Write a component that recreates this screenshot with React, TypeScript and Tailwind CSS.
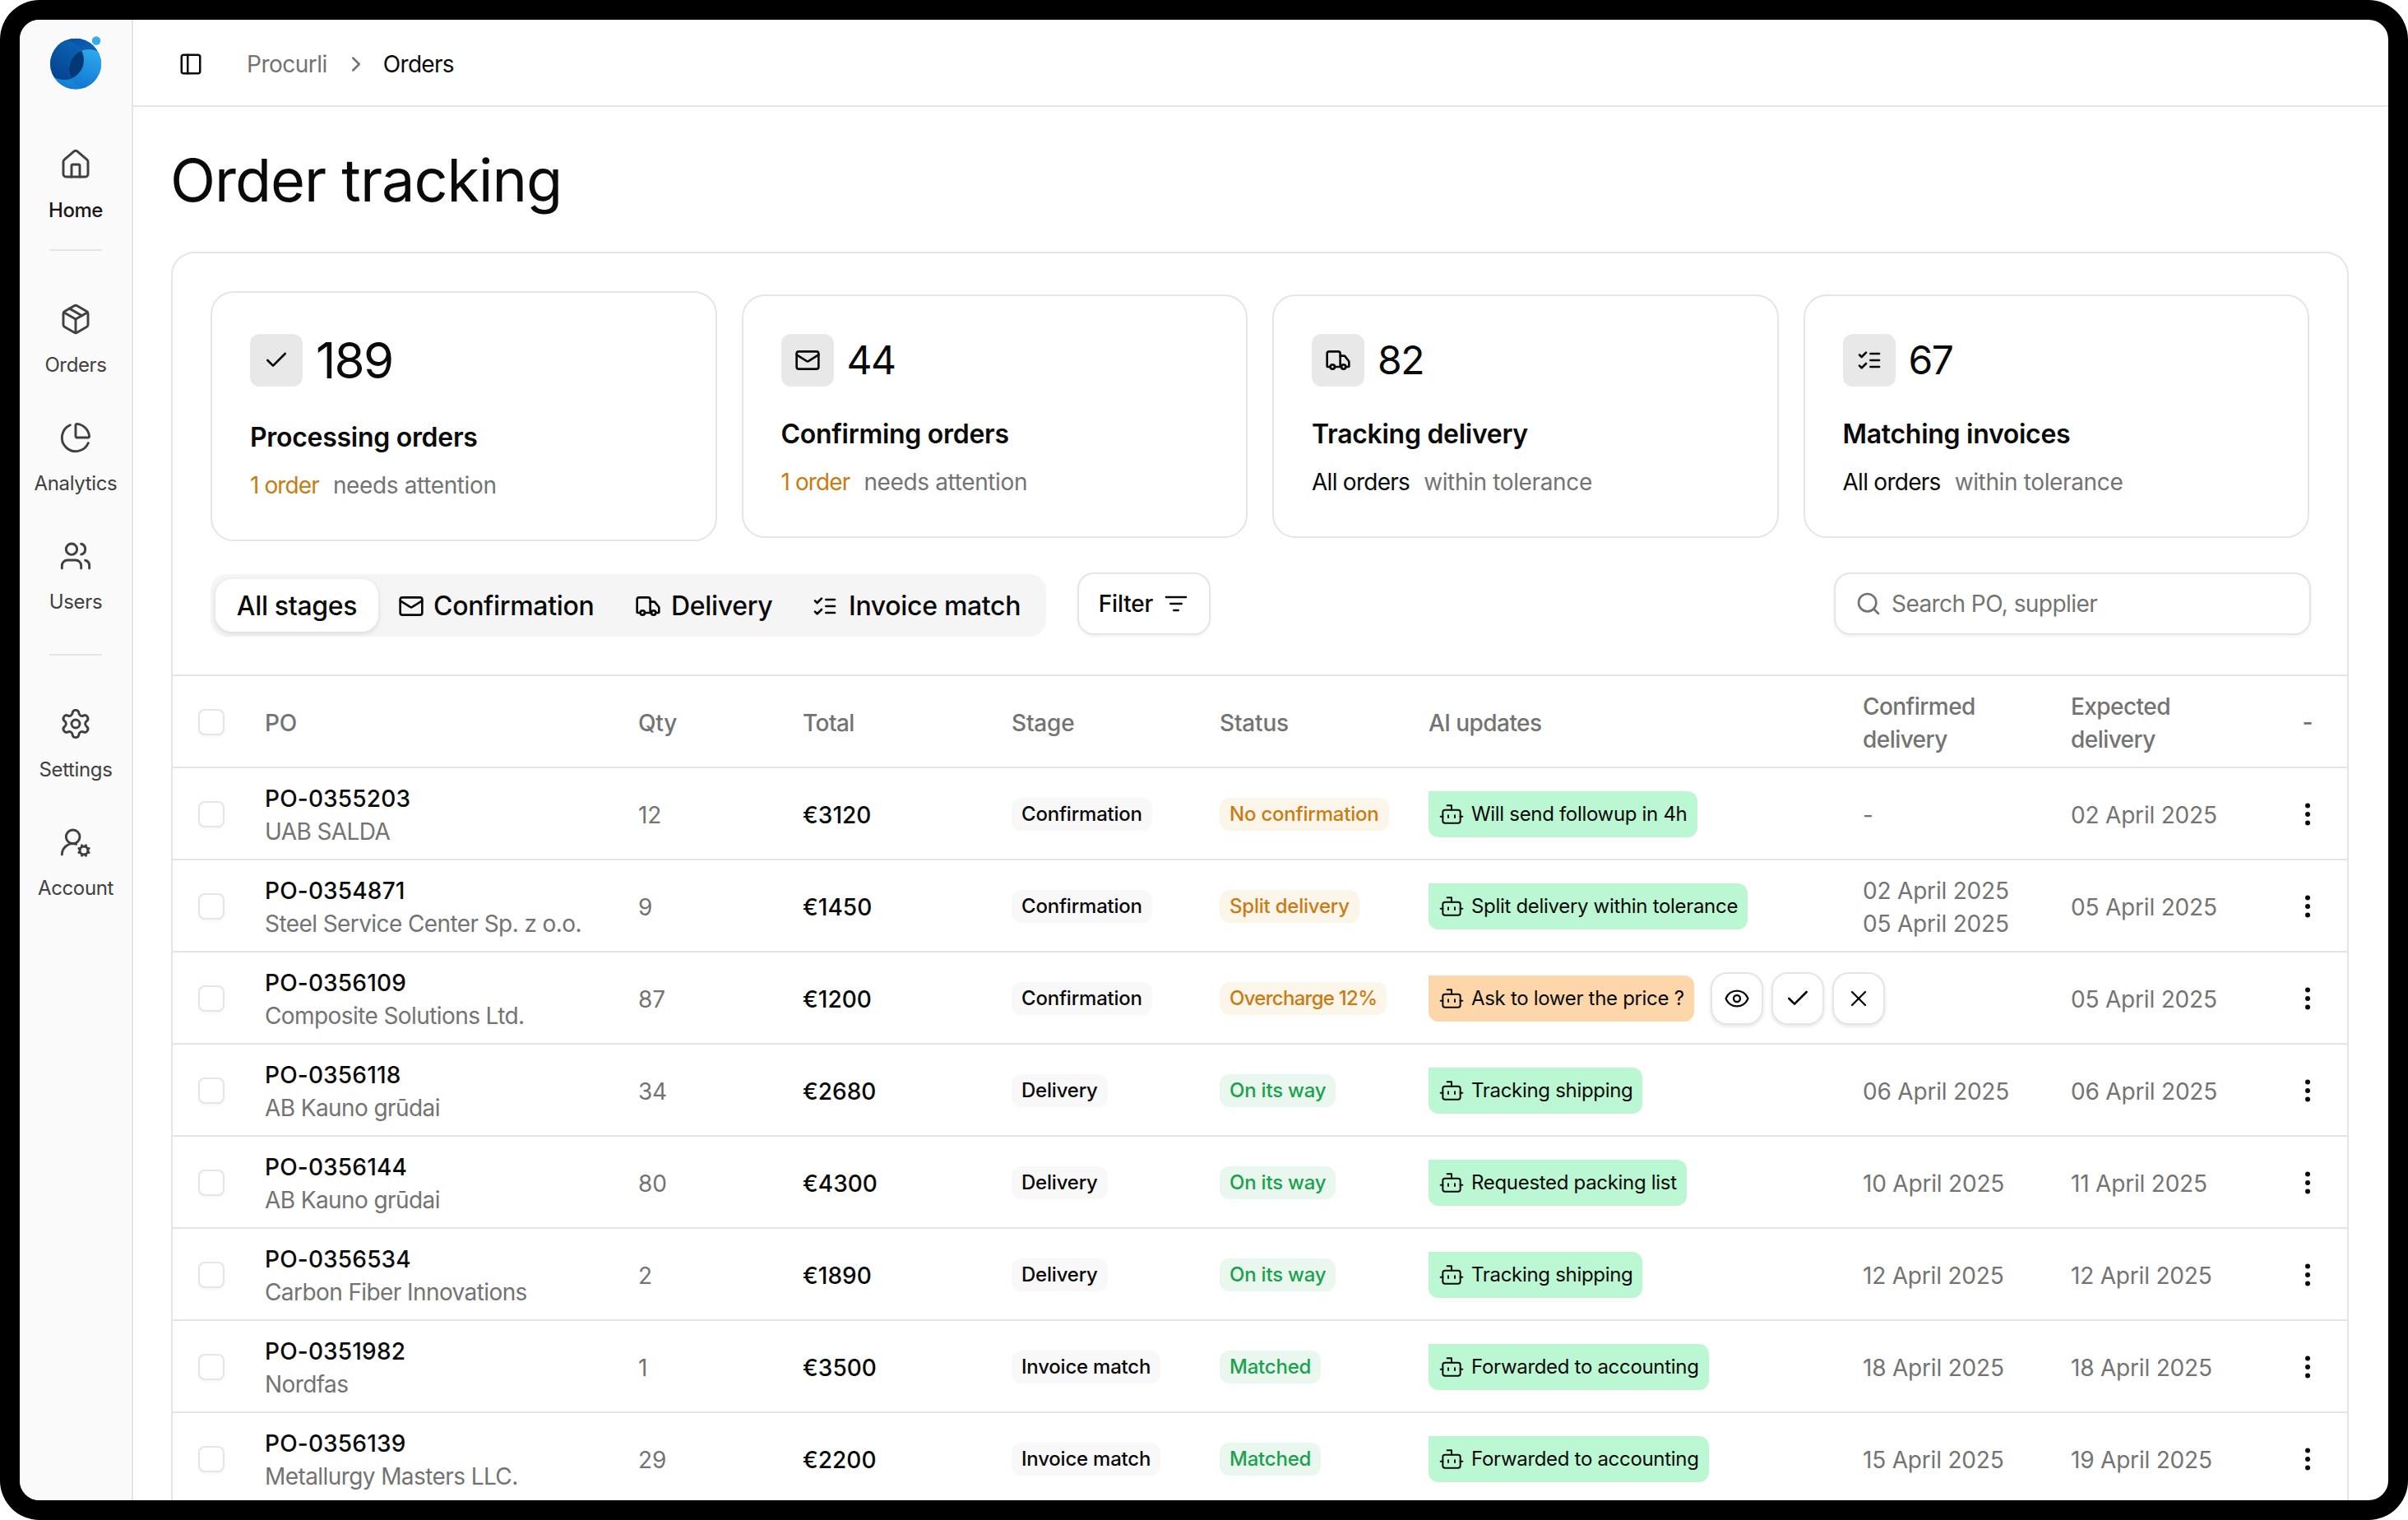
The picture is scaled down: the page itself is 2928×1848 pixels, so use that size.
import React from 'react';
import {
  Bot,
  Check,
  ChevronRight,
  EllipsisVertical,
  Eye,
  House,
  Mail,
  Package,
  PanelLeft,
  ChartPie,
  Search,
  Settings,
  Truck,
  UserRoundCog,
  Users,
  X,
} from 'lucide-react';

type IconProps = { size?: number; strokeWidth?: number; className?: string };

const LineIcon = ({ size = 32, strokeWidth = 2, className, d }: IconProps & { d: string }) => (
  <svg
    width={size}
    height={size}
    viewBox="0 0 24 24"
    fill="none"
    stroke="currentColor"
    strokeWidth={strokeWidth}
    strokeLinecap="round"
    strokeLinejoin="round"
    className={className}
  >
    <path d={d} />
  </svg>
);

const ListChecks = (props: IconProps) => (
  <LineIcon {...props} d="m3 17 2 2 4-4 M3 7l2 2 4-4 M13 6h8 M13 12h8 M13 18h8" />
);

const ListFilter = (props: IconProps) => <LineIcon {...props} d="M3 6h18 M7 12h10 M10 18h4" />;

const Logo = () => (
  <svg width="64" height="66" viewBox="61 43 64 66" className="shrink-0">
    <defs>
      <linearGradient id="base" x1="0.1" y1="0.1" x2="0.85" y2="0.95">
        <stop offset="0" stopColor="#05499b" />
        <stop offset="0.5" stopColor="#0c62b8" />
        <stop offset="1" stopColor="#1a90e4" />
      </linearGradient>
      <linearGradient id="ring" x1="0.7" y1="0" x2="0.3" y2="1">
        <stop offset="0" stopColor="#2fabee" />
        <stop offset="1" stopColor="#1176cf" />
      </linearGradient>
      <linearGradient id="dark" x1="0.8" y1="0" x2="0.2" y2="1">
        <stop offset="0" stopColor="#0d63b6" />
        <stop offset="1" stopColor="#04408c" />
      </linearGradient>
      <clipPath id="disc">
        <circle cx="93" cy="77.5" r="31" />
      </clipPath>
      <clipPath id="left">
        <circle cx="79" cy="73" r="24" />
      </clipPath>
    </defs>
    <g clipPath="url(#disc)">
      <circle cx="93" cy="77.5" r="31" fill="url(#base)" />
      <path d="M60 86 Q78 106 100 90 L126 60 V112 H60Z" fill="url(#ring)" />
      <circle cx="79" cy="73" r="24" fill="url(#dark)" />
      <circle cx="109" cy="84" r="24" fill="url(#ring)" />
      <circle cx="109" cy="84" r="24" fill="#033877" clipPath="url(#left)" />
    </g>
    <circle cx="118" cy="49.5" r="5.2" fill="#38ace8" />
  </svg>
);

const navGroups = [
  [{ label: 'Home', icon: House, active: true }],
  [
    { label: 'Orders', icon: Package },
    { label: 'Analytics', icon: ChartPie },
    { label: 'Users', icon: Users },
  ],
  [
    { label: 'Settings', icon: Settings },
    { label: 'Account', icon: UserRoundCog },
  ],
];

const Sidebar = () => (
  <aside className="flex w-[138px] shrink-0 flex-col items-center border-r-2 border-[#e5e5e5] bg-[#fafafa] pt-[19px]">
    <Logo />
    <nav className="mt-[71px] flex flex-col items-center">
      {navGroups.map((group, i) => (
        <React.Fragment key={i}>
          {i > 0 && (
            <div
              className={
                i === 1
                  ? 'mt-[31px] mb-[63px] h-0.5 w-16 bg-[#e5e5e5]'
                  : 'mt-[47px] mb-[63px] h-0.5 w-16 bg-[#e5e5e5]'
              }
            />
          )}
          <div className="flex flex-col gap-[52px]">
            {group.map(({ label, icon: Icon, ...item }) => (
              <a key={label} className="flex flex-col items-center gap-5 text-[#404040]">
                <Icon size={40} strokeWidth={1.75} />
                <span
                  className={
                    'active' in item
                      ? 'text-2xl leading-8 font-medium tracking-[-0.02em] text-[#171717]'
                      : 'text-2xl leading-8 tracking-[-0.015em]'
                  }
                >
                  {label}
                </span>
              </a>
            ))}
          </div>
        </React.Fragment>
      ))}
    </nav>
  </aside>
);

const stats = [
  { value: '189', label: 'Processing orders', icon: Check, highlight: '1 order', note: 'needs attention', warn: true, large: true },
  { value: '44', label: 'Confirming orders', icon: Mail, highlight: '1 order', note: 'needs attention', warn: true },
  { value: '82', label: 'Tracking delivery', icon: Truck, highlight: 'All orders', note: 'within tolerance' },
  { value: '67', label: 'Matching invoices', icon: ListChecks, highlight: 'All orders', note: 'within tolerance' },
];

const Stats = () => (
  <div className="grid grid-cols-4 items-center gap-[30px] px-[46px] pt-[46px]">
    {stats.map(({ icon: Icon, ...s }) => (
      <div key={s.label} className="rounded-[28px] border-2 border-[#e5e5e5] p-[46px]">
        <div className="flex items-center gap-4">
          <div className="flex size-16 items-center justify-center rounded-xl bg-[#e8e8e8]">
            <Icon size={32} />
          </div>
          <span
            className={
              s.large
                ? 'text-[60px] leading-[72px] tracking-[-0.03em]'
                : 'text-[48px] leading-[64px] tracking-[-0.03em]'
            }
          >
            {s.value}
          </span>
        </div>
        <p className="mt-[42px] text-[32px] leading-8 font-semibold tracking-[-0.009em]">{s.label}</p>
        <div className="mt-[22px] flex gap-[17px] text-[28px] leading-10">
          <span className={s.warn ? 'tracking-[-0.032em] text-[#ca7b12]' : 'tracking-[-0.026em]'}>
            {s.highlight}
          </span>
          <span className="tracking-[-0.013em] text-[#737373]">{s.note}</span>
        </div>
      </div>
    ))}
  </div>
);

const Toolbar = () => (
  <div className="mt-[38px] flex h-[76px] items-start pr-11 pl-[46px]">
    <div className="mt-0.5 flex h-[76px] w-[1016px] items-center rounded-[20px] bg-[#f5f5f5] px-1.5 text-[32px] font-medium tracking-[-0.01em]">
      <button className="flex h-16 w-[198px] items-center justify-center rounded-[20px] bg-white pt-0.5 shadow-[0_2px_6px_rgba(0,0,0,0.12)]">
        All stages
      </button>
      <button className="flex h-16 w-[288px] items-center gap-[11px] pt-px pl-6">
        <Mail size={32} />
        Confirmation
      </button>
      <button className="flex h-16 w-[215px] items-center gap-3 pt-px pl-6">
        <Truck size={32} />
        Delivery
      </button>
      <button className="flex h-16 items-center gap-[13px] pt-px pl-6">
        <ListChecks size={32} />
        Invoice match
      </button>
    </div>
    <button className="ml-[38px] flex h-[76px] w-[162px] items-center justify-center gap-3 rounded-[20px] border-2 border-[#e5e5e5] text-[28px] font-[450] shadow-[0_2px_4px_rgba(0,0,0,0.05)]">
      Filter
      <ListFilter size={32} />
    </button>
    <div className="ml-auto flex h-[76px] w-[580px] items-center gap-3 rounded-[20px] border-2 border-[#e5e5e5] pl-6 text-[28px] tracking-[-0.02em] text-[#737373] shadow-[0_2px_4px_rgba(0,0,0,0.05)]">
      <Search size={32} />
      Search PO, supplier
    </div>
  </div>
);

type Order = {
  po: string;
  supplier: string;
  qty: number;
  total: string;
  stage: string;
  status: string;
  tone: 'warn' | 'ok';
  update: string;
  ask?: boolean;
  confirmed: string[];
  expected: string;
};

const orders: Order[] = [
  { po: 'PO-0355203', supplier: 'UAB SALDA', qty: 12, total: '€3120', stage: 'Confirmation', status: 'No confirmation', tone: 'warn', update: 'Will send followup in 4h', confirmed: ['-'], expected: '02 April 2025' },
  { po: 'PO-0354871', supplier: 'Steel Service Center Sp. z o.o.', qty: 9, total: '€1450', stage: 'Confirmation', status: 'Split delivery', tone: 'warn', update: 'Split delivery within tolerance', confirmed: ['02 April 2025', '05 April 2025'], expected: '05 April 2025' },
  { po: 'PO-0356109', supplier: 'Composite Solutions Ltd.', qty: 87, total: '€1200', stage: 'Confirmation', status: 'Overcharge 12%', tone: 'warn', update: 'Ask to lower the price ?', ask: true, confirmed: [], expected: '05 April 2025' },
  { po: 'PO-0356118', supplier: 'AB Kauno grūdai', qty: 34, total: '€2680', stage: 'Delivery', status: 'On its way', tone: 'ok', update: 'Tracking shipping', confirmed: ['06 April 2025'], expected: '06 April 2025' },
  { po: 'PO-0356144', supplier: 'AB Kauno grūdai', qty: 80, total: '€4300', stage: 'Delivery', status: 'On its way', tone: 'ok', update: 'Requested packing list', confirmed: ['10 April 2025'], expected: '11 April 2025' },
  { po: 'PO-0356534', supplier: 'Carbon Fiber Innovations', qty: 2, total: '€1890', stage: 'Delivery', status: 'On its way', tone: 'ok', update: 'Tracking shipping', confirmed: ['12 April 2025'], expected: '12 April 2025' },
  { po: 'PO-0351982', supplier: 'Nordfas', qty: 1, total: '€3500', stage: 'Invoice match', status: 'Matched', tone: 'ok', update: 'Forwarded to accounting', confirmed: ['18 April 2025'], expected: '18 April 2025' },
  { po: 'PO-0356139', supplier: 'Metallurgy Masters LLC.', qty: 29, total: '€2200', stage: 'Invoice match', status: 'Matched', tone: 'ok', update: 'Forwarded to accounting', confirmed: ['15 April 2025'], expected: '19 April 2025' },
];

const rowClasses =
  'grid h-28 grid-cols-[81px_454px_200px_254px_253px_254px_528px_253px_270px_36px] items-center border-b-2 border-[#e5e5e5] pt-0.5 pl-[31px] text-[28px] leading-10';

const badgeClasses = 'inline-flex h-10 items-center rounded-xl px-3 text-2xl font-medium';

const actionClasses =
  'flex size-16 shrink-0 items-center justify-center rounded-[20px] border-2 border-[#e5e5e5] bg-white shadow-[0_2px_4px_rgba(0,0,0,0.1)]';

const Checkbox = () => (
  <span className="block size-8 rounded-lg border-2 border-[#e5e5e5] shadow-[0_2px_3px_rgba(0,0,0,0.04)]" />
);

const OrderRow = ({ order }: { order: Order }) => (
  <div className={rowClasses}>
    <Checkbox />
    <div className="pt-px">
      <p className="font-medium tracking-[0.006em]">{order.po}</p>
      <p className="tracking-[-0.021em] text-[#737373]">{order.supplier}</p>
    </div>
    <span className="pt-px text-[#737373]">{order.qty}</span>
    <span className="pt-px font-medium tracking-normal">{order.total}</span>
    <div className="flex">
      <span className={`${badgeClasses} bg-[#f8f8f8] tracking-[-0.009em]`}>{order.stage}</span>
    </div>
    <div className="flex">
      <span
        className={`${badgeClasses} ${
          order.tone === 'warn' ? 'bg-[#fcf5ea] text-[#ca7b12]' : 'bg-[#e9f7ee] text-[#1ba14d]'
        } ${order.ask ? 'tracking-[-0.03em]' : 'tracking-[-0.009em]'}`}
      >
        {order.status}
      </span>
    </div>
    <div className="flex items-center gap-2.5">
      <span
        className={`inline-flex h-14 shrink-0 items-center gap-2 rounded-xl rounded-tl-none px-3 text-2xl tracking-[-0.013em] whitespace-nowrap ${
          order.ask ? 'mr-2.5 bg-[#fdd6a9]' : 'bg-[#bbf7d2]'
        }`}
      >
        <Bot size={32} strokeWidth={1.5} />
        {order.update}
      </span>
      {order.ask && (
        <>
          <button className={actionClasses}>
            <Eye size={32} strokeWidth={1.75} />
          </button>
          <button className={actionClasses}>
            <Check size={32} />
          </button>
          <button className={actionClasses}>
            <X size={32} strokeWidth={1.75} />
          </button>
        </>
      )}
    </div>
    <div className="pt-px tracking-[-0.007em] text-[#737373]">
      {order.confirmed.map((date) => (
        <p key={date}>{date}</p>
      ))}
    </div>
    <span className="pt-px tracking-[-0.007em] text-[#737373]">{order.expected}</span>
    <EllipsisVertical size={36} />
  </div>
);

const OrdersTable = () => (
  <div className="mt-12 border-t-2 border-[#e5e5e5]">
    <div className={`${rowClasses} font-medium text-[#737373]`}>
      <Checkbox />
      <span className="pt-px">PO</span>
      <span className="pt-px">Qty</span>
      <span className="pt-px tracking-[-0.02em]">Total</span>
      <span className="pt-px">Stage</span>
      <span className="pt-px">Status</span>
      <span className="pt-px tracking-[-0.02em]">AI updates</span>
      <span className="w-40 pt-px tracking-[-0.02em]">Confirmed delivery</span>
      <span className="w-40 pt-px tracking-[-0.02em]">Expected delivery</span>
      <span className="text-center">-</span>
    </div>
    {orders.map((order) => (
      <OrderRow key={order.po} order={order} />
    ))}
  </div>
);

export default function App() {
  return (
    <div className="h-[1848px] w-[2928px] bg-white font-['Inter',sans-serif] tracking-[-0.012em] text-[#0a0a0a]">
      <div className="h-full rounded-[48px] bg-black p-6">
        <div className="flex h-full overflow-hidden rounded-3xl bg-white">
          <Sidebar />
          <main className="flex min-w-0 flex-1 flex-col">
            <header className="flex h-[106px] shrink-0 items-center border-b-2 border-[#e5e5e5] pt-[3px] pl-[55px] text-[28px]">
              <PanelLeft size={30} />
              <span className="ml-[53px] tracking-[-0.018em] text-[#737373]">Procurli</span>
              <ChevronRight size={30} className="mr-[18px] ml-5 text-[#737373]" />
              <span className="tracking-[-0.025em]">Orders</span>
            </header>
            <div className="px-[46px] pt-12 pr-12">
              <h1 className="-ml-px pt-px text-[72px] leading-[79px] tracking-[-0.014em]">Order tracking</h1>
              <section className="mt-12 rounded-t-[28px] border-2 border-b-0 border-[#e5e5e5]">
                <Stats />
                <Toolbar />
                <OrdersTable />
              </section>
            </div>
          </main>
        </div>
      </div>
    </div>
  );
}
